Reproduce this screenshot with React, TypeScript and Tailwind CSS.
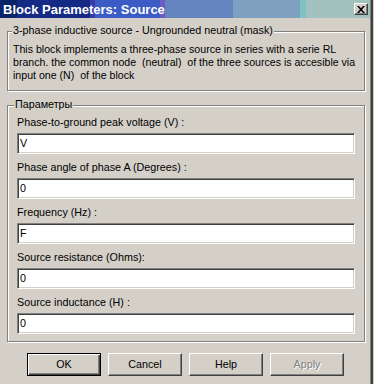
import React from "react";

function Field({ label, value }: { label: string; value: string }) {
  return (
    <div className="flex flex-col">
      <div className="h-[13px] leading-[13px] whitespace-nowrap">{label}</div>
      <div className="mt-[4px] h-[21px] w-[338px] bg-white border border-t-[#808080] border-l-[#808080] border-r-white border-b-white shadow-[inset_1px_1px_0_#404040,inset_-1px_-1px_0_#d4d0c8] pl-[2px] flex items-center leading-[13px]">
        {value}
      </div>
    </div>
  );
}

function Btn({ children, def, disabled }: { children: React.ReactNode; def?: boolean; disabled?: boolean }) {
  const base = "w-[74px] h-[23px] bg-[#d4d0c8] flex items-center justify-center leading-[13px]";
  const frame = def
    ? "border border-black shadow-[inset_1px_1px_0_#fff,inset_-1px_-1px_0_#404040,inset_-2px_-2px_0_#808080]"
    : "border border-t-white border-l-white border-r-[#404040] border-b-[#404040] shadow-[inset_-1px_-1px_0_#808080]";
  return (
    <div className={base + " " + frame}>
      <span className={disabled ? "text-[#808080] [text-shadow:1px_1px_0_#fff]" : ""}>{children}</span>
    </div>
  );
}

export default function App() {
  return (
    <div className="w-[374px] h-[384px] bg-[#d4d0c8] overflow-hidden flex font-['Liberation_Sans',Arial,sans-serif] text-[10.75px] text-black">
      <div className="w-[370px] flex flex-col">
        <div className="h-[18px] w-[370px] flex items-center justify-between pl-[3px] pr-[2px] bg-[linear-gradient(90deg,#0a246a_0px,#0a246a_17px,#142a84_17px,#142a84_90px,#3a3aa8_90px,#3a3aa8_95px,#3a5cc4_95px,#3a5cc4_160px,#6a5cc0_160px,#6a5cc0_165px,#6484c0_165px,#6484c0_233px,#7fa1c0_233px,#7fa1c0_300px,#7fc4c2_300px,#7fc4c2_306px,#a2c2c0_306px,#a2c2c0_370px)]">
          <span className="text-white font-bold text-[13px] leading-[15px] whitespace-nowrap">Block Parameters: Source</span>
          <div className="w-[14px] h-[12px] bg-[#d4d0c8] border border-t-white border-l-white border-r-[#404040] border-b-[#404040] shadow-[inset_-1px_-1px_0_#808080] flex items-center justify-center">
            <svg width="8" height="7" viewBox="0 0 8 7" className="block">
              <path d="M0 0h2l2 2.2L6 0h2L5 3.5 8 7H6L4 4.8 2 7H0l3-3.5z" fill="#000" />
            </svg>
          </div>
        </div>

        <div className="relative ml-[7px] mt-[13px] w-[358px] h-[60px] border border-[#808080] shadow-[1px_1px_0_#fff,inset_1px_1px_0_#fff] pt-[11px] pl-[5px]">
          <span className="absolute -top-[8px] left-[4px] px-[1px] bg-[#d4d0c8] leading-[13px] whitespace-nowrap">
            3-phase inductive source - Ungrounded neutral (mask)
          </span>
          <div className="leading-[13px] whitespace-nowrap text-[10.6px]">
            <div>This block implements a three-phase source in series with a serie RL</div>
            <div>branch. the common node&nbsp; (neutral)&nbsp; of the three sources is accesible via</div>
            <div>input one (N)&nbsp; of the block</div>
          </div>
        </div>

        <div className="relative ml-[7px] mt-[14px] w-[358px] h-[237px] border border-[#808080] shadow-[1px_1px_0_#fff,inset_1px_1px_0_#fff] pt-[10px] pl-[9px] flex flex-col gap-[7px]">
          <span className="absolute -top-[8px] left-[6px] px-[1px] bg-[#d4d0c8] leading-[13px] whitespace-nowrap">
            Параметры
          </span>
          <Field label="Phase-to-ground peak voltage (V) :" value="V" />
          <Field label="Phase angle of phase A (Degrees) :" value="0" />
          <Field label="Frequency (Hz) :" value="F" />
          <Field label="Source resistance (Ohms):" value="0" />
          <Field label="Source inductance (H) :" value="0" />
        </div>

        <div className="mt-[11px] ml-[27px] flex gap-[7px]">
          <Btn def>OK</Btn>
          <Btn>Cancel</Btn>
          <Btn>Help</Btn>
          <Btn disabled>Apply</Btn>
        </div>
      </div>
      <div className="w-[1px] h-full bg-[#808080]" />
      <div className="w-[2px] h-full bg-[#404040]" />
    </div>
  );
}
